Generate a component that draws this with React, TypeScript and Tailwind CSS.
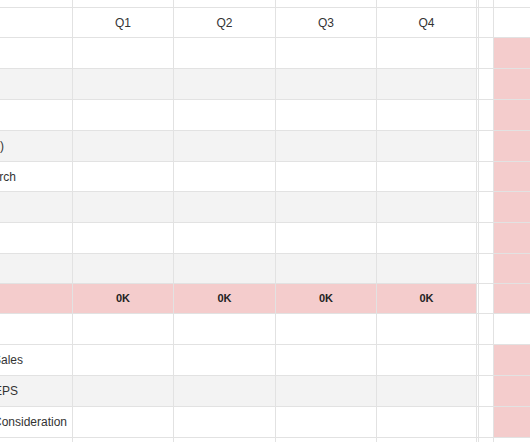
import React from 'react'

type Row = {
  h: string
  bg: 'white' | 'grey' | 'pink'
  side: boolean
  label?: string
  labelClass?: string
  end?: boolean
}

const rows: Row[] = [
  { h: 'h-[31px]', bg: 'white', side: true },
  { h: 'h-[31px]', bg: 'grey', side: true },
  { h: 'h-[31px]', bg: 'white', side: true },
  { h: 'h-[31px]', bg: 'grey', side: true, label: 'Other (Misc)', labelClass: 'w-[4px]', end: true },
  { h: 'h-[30px]', bg: 'white', side: true, label: 'Market Research', labelClass: 'w-[16px]', end: true },
  { h: 'h-[31px]', bg: 'grey', side: true },
  { h: 'h-[31px]', bg: 'white', side: true },
  { h: 'h-[30px]', bg: 'grey', side: true },
  { h: 'h-[30px]', bg: 'pink', side: true },
  { h: 'h-[31px]', bg: 'white', side: false },
  { h: 'h-[31px]', bg: 'white', side: true, label: 'Sales', labelClass: 'ml-[-7px]' },
  { h: 'h-[31px]', bg: 'grey', side: true, label: 'EPS', labelClass: 'ml-[-6px]' },
  { h: 'h-[31px]', bg: 'white', side: true, label: 'Consideration', labelClass: 'ml-[-7px]' },
  { h: 'h-[31px]', bg: 'white', side: false },
]

// quarter columns: right border lands at 173, 275, 376, 476
const quarters = [
  { name: 'Q1', w: 'w-[101px]' },
  { name: 'Q2', w: 'w-[102px]' },
  { name: 'Q3', w: 'w-[101px]' },
  { name: 'Q4', w: 'w-[100px]' },
]

const line = 'border-[#e2e2e2]'

const fill = {
  white: 'bg-white',
  grey: 'bg-[#f3f3f3]',
  pink: 'bg-[#f4cccc]',
}

function Gutter() {
  return (
    <>
      <div className={`w-[2px] shrink-0 border-r ${line}`} />
      <div className={`w-[15px] shrink-0 border-r ${line}`} />
    </>
  )
}

export default function App() {
  return (
    <div
      className="w-[530px] h-[442px] overflow-hidden bg-white text-[#333]"
      style={{ fontFamily: '"Liberation Sans", Arial, sans-serif' }}
    >
      {/* strip above header */}
      <div className={`flex h-[8px] border-b ${line}`}>
        <div className={`w-[73px] shrink-0 border-r ${line}`} />
        {quarters.map(q => (
          <div key={q.name} className={`${q.w} shrink-0 border-r ${line}`} />
        ))}
        <Gutter />
        <div className="flex-1" />
      </div>

      {/* header */}
      <div className={`flex h-[30px] border-b ${line}`}>
        <div className={`w-[73px] shrink-0 border-r ${line}`} />
        {quarters.map(q => (
          <div
            key={q.name}
            className={`${q.w} shrink-0 border-r ${line} flex items-center justify-center text-[12px]`}
          >
            {q.name}
          </div>
        ))}
        <Gutter />
        <div className="flex-1" />
      </div>

      {rows.map((r, i) => (
        <div key={i} className={`flex ${r.h} border-b ${line}`}>
          <div
            className={`w-[73px] shrink-0 border-r ${line} ${fill[r.bg]} overflow-hidden flex items-center text-[12px] whitespace-nowrap`}
          >
            {r.label &&
              (r.end ? (
                <div className={`${r.labelClass} shrink-0 flex justify-end`}>
                  <span className="shrink-0">{r.label}</span>
                </div>
              ) : (
                <span className={`${r.labelClass} shrink-0`}>{r.label}</span>
              ))}
          </div>
          {quarters.map(q => (
            <div
              key={q.name}
              className={`${q.w} shrink-0 border-r ${line} ${fill[r.bg]} flex items-center justify-center text-[11px] font-bold text-[#222]`}
            >
              {r.bg === 'pink' ? '0K' : ''}
            </div>
          ))}
          <Gutter />
          <div className={`flex-1 ${r.side ? 'bg-[#f4cccc]' : 'bg-white'}`} />
        </div>
      ))}
    </div>
  )
}
